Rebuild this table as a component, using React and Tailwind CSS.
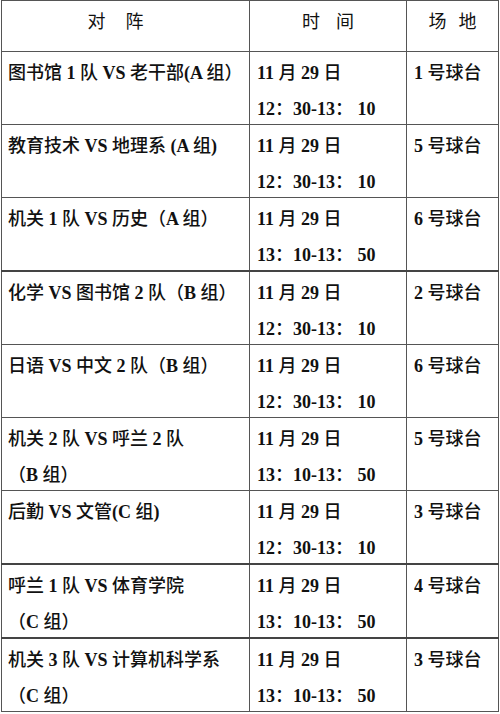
const rows = [
  { team: ["图书馆 1 队 VS 老干部(A 组）"], date: "11 月 29 日", time: "12：30-13： 10", court: "1 号球台" },
  { team: ["教育技术 VS 地理系 (A 组)"], date: "11 月 29 日", time: "12：30-13： 10", court: "5 号球台" },
  { team: ["机关 1 队 VS 历史（A 组）"], date: "11 月 29 日", time: "13：10-13： 50", court: "6 号球台", thick: true },
  { team: ["化学 VS 图书馆 2 队（B 组）"], date: "11 月 29 日", time: "12：30-13： 10", court: "2 号球台" },
  { team: ["日语 VS 中文 2 队（B 组）"], date: "11 月 29 日", time: "12：30-13： 10", court: "6 号球台" },
  { team: ["机关 2 队 VS 呼兰 2 队", "（B 组）"], date: "11 月 29 日", time: "13：10-13： 50", court: "5 号球台" },
  { team: ["后勤 VS 文管(C 组)"], date: "11 月 29 日", time: "12：30-13： 10", court: "3 号球台", thick: true },
  { team: ["呼兰 1 队 VS 体育学院", "（C 组）"], date: "11 月 29 日", time: "13：10-13： 50", court: "4 号球台", thick: true },
  { team: ["机关 3 队 VS 计算机科学系", "（C 组）"], date: "11 月 29 日", time: "13：10-13： 50", court: "3 号球台" },
];

// latin runs in bold Times-like, CJK runs in Noto
function Txt({ s }) {
  const parts = s.split(/([\x20-\x7e]+)/).filter((p) => p !== "");
  return (
    <>
      {parts.map((p, i) =>
        /^[\x20-\x7e]+$/.test(p) ? (
          <span key={i} className="font-['Liberation_Serif',serif] font-bold">
            {p}
          </span>
        ) : (
          <span key={i} className="font-['Noto_Sans_CJK_SC',sans-serif] font-medium">
            {p}
          </span>
        )
      )}
    </>
  );
}

function Line({ s }) {
  return (
    <div className="h-[36px] leading-[36px] overflow-hidden whitespace-pre">
      <Txt s={s} />
    </div>
  );
}

export default function App() {
  const td = "border border-[#555] p-0 align-top";
  const box = "h-[72px] overflow-hidden pt-[1px] px-[7px]";
  return (
    <div className="bg-white w-[500px] h-[714px] pl-[1px] text-[18px] text-[#111]">
      <table className="border-collapse w-[497px] table-fixed">
        <colgroup>
          <col className="w-[248px]" />
          <col className="w-[157px]" />
          <col className="w-[92px]" />
        </colgroup>
        <thead>
          <tr className="font-['Noto_Sans_CJK_SC',sans-serif]">
            <th className={td + " font-normal"}>
              <div className="h-[50px] pt-[1px] pr-[20px] leading-[36px] whitespace-pre">对     阵</div>
            </th>
            <th className={td + " font-normal"}>
              <div className="h-[50px] pt-[1px] leading-[36px] whitespace-pre tracking-[6px] pl-[6px]">时 间</div>
            </th>
            <th className={td + " font-normal"}>
              <div className="h-[50px] pt-[1px] leading-[36px] whitespace-pre tracking-[4px] pl-[4px]">场 地</div>
            </th>
          </tr>
        </thead>
        <tbody>
          {rows.map((r, i) => (
            <tr key={i} className={r.thick ? "border-b-2 border-[#444]" : ""}>
              <td className={td}>
                <div className={box + " pl-[6px]"}>
                  {r.team.map((t, j) => (
                    <Line key={j} s={t} />
                  ))}
                </div>
              </td>
              <td className={td}>
                <div className={box}>
                  <Line s={r.date} />
                  <Line s={r.time} />
                </div>
              </td>
              <td className={td}>
                <div className={box}>
                  <Line s={r.court} />
                </div>
              </td>
            </tr>
          ))}
        </tbody>
      </table>
    </div>
  );
}
